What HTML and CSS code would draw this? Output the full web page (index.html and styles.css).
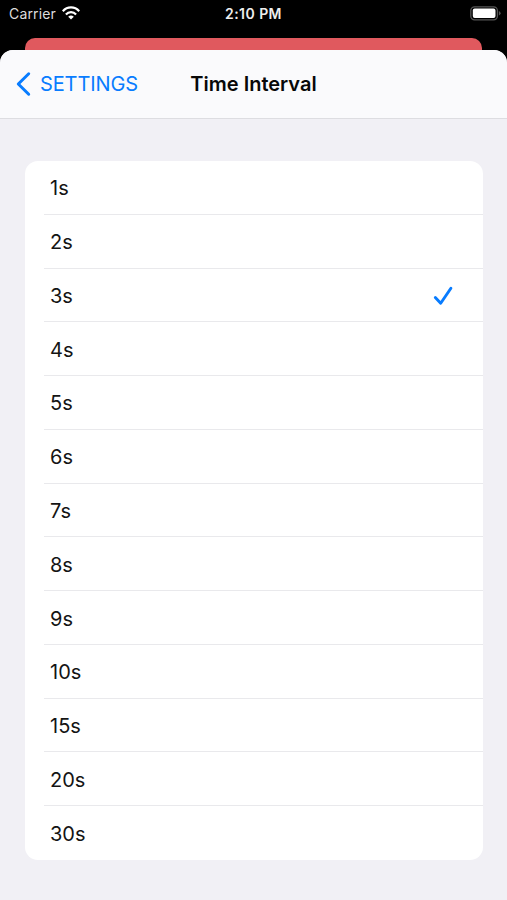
FILE: index.html
```html
<!DOCTYPE html>
<html lang="en">
<head>
<meta charset="utf-8">
<title>Time Interval</title>
<link rel="stylesheet" href="styles.css">
</head>
<body>
<header class="status">
  <div class="carrier"><span>Carrier</span>
    <svg class="wifi" width="18" height="14" viewBox="0 0 18 14"><path fill="none" stroke="#fff" stroke-width="2.200" d="M.8 5.200C5.300.200 12.700.200 17.200 5.200M3.900 8.400C6.700 5.400 11.300 5.400 14.100 8.400"/><path fill="#fff" d="M9 13.500 6.200 10.700Q9 8.300 11.800 10.700Z"/></svg>
  </div>
  <div class="time">2:10 PM</div>
  <svg class="battery" width="31" height="15" viewBox="0 0 31 15"><rect x=".8" y=".8" width="26.600" height="13" rx="3.800" fill="none" stroke="#555" stroke-width="1.300"/><rect x="2.800" y="2.600" width="22.700" height="9.400" rx="1.900" fill="#fff"/><path d="M28.900 5q1.700.8 1.700 2.300t-1.700 2.300z" fill="#555"/></svg>
</header>
<div class="behind"></div>
<main class="sheet">
  <nav class="nav">
    <a class="back"><svg width="16" height="26" viewBox="0 0 16 26"><path d="M12.700 2.800 2.300 13l10.400 10.200" fill="none" stroke="#087cff" stroke-width="3" stroke-linecap="round" stroke-linejoin="round"/></svg><span>SETTINGS</span></a>
    <h1>Time Interval</h1>
  </nav>
  <ul class="list">
    <li><span>1s</span></li>
    <li><span>2s</span></li>
    <li><span>3s</span><svg class="check" width="20" height="20" viewBox="0 0 20 20"><path d="M2.300 11.500 7.700 17.300 17.900 2.300" fill="none" stroke="#087cff" stroke-width="2.900" stroke-linecap="round" stroke-linejoin="round"/></svg></li>
    <li><span>4s</span></li>
    <li><span>5s</span></li>
    <li><span>6s</span></li>
    <li><span>7s</span></li>
    <li><span>8s</span></li>
    <li><span>9s</span></li>
    <li><span>10s</span></li>
    <li><span>15s</span></li>
    <li><span>20s</span></li>
    <li><span>30s</span></li>
  </ul>
</main>
</body>
</html>
```
FILE: styles.css
```css
* { box-sizing: border-box; }
body { margin: 0; height: 900px; overflow: hidden; display: flex; flex-direction: column; background: #000; font-family: Inter, sans-serif; }
.status { height: 38px; padding: 0 6px 12px 9px; display: grid; grid-template-columns: 1fr auto 1fr; align-items: center; color: #eee; font-size: 14px; }
.carrier { display: flex; align-items: center; gap: 6px; color: #ddd; letter-spacing: .15px; }
.time { margin-right: 3px; font-weight: 600; letter-spacing: .45px; }
.battery { justify-self: end; }
.behind { height: 12px; margin: 0 25px; background: #e0595e; border-radius: 10px 10px 0 0; }
.sheet { flex: 1; background: #f1f0f5; border-radius: 13px 13px 0 0; overflow: hidden; }
.nav { height: 69px; padding: 0 16px; display: grid; grid-template-columns: 1fr auto 1fr; align-items: center; background: #fafafc; border-bottom: 1px solid #dddde1; }
.back { display: flex; align-items: center; gap: 8px; color: #087cff; font-size: 20px; letter-spacing: -.12px; }
h1 { margin: 0; font-size: 20px; font-weight: 600; color: #080808; }
.list { list-style: none; margin: 42px 24px 0 25px; padding: 0; background: #fff; border-radius: 13px; overflow: hidden; }
li { height: 53.77px; margin-left: 19px; padding: 2px 30px 0 6px; display: flex; align-items: center; justify-content: space-between; border-bottom: 1px solid #e9e9ec; font-size: 20px; color: #141414; }
li:last-child { border-bottom: 0; }
```
